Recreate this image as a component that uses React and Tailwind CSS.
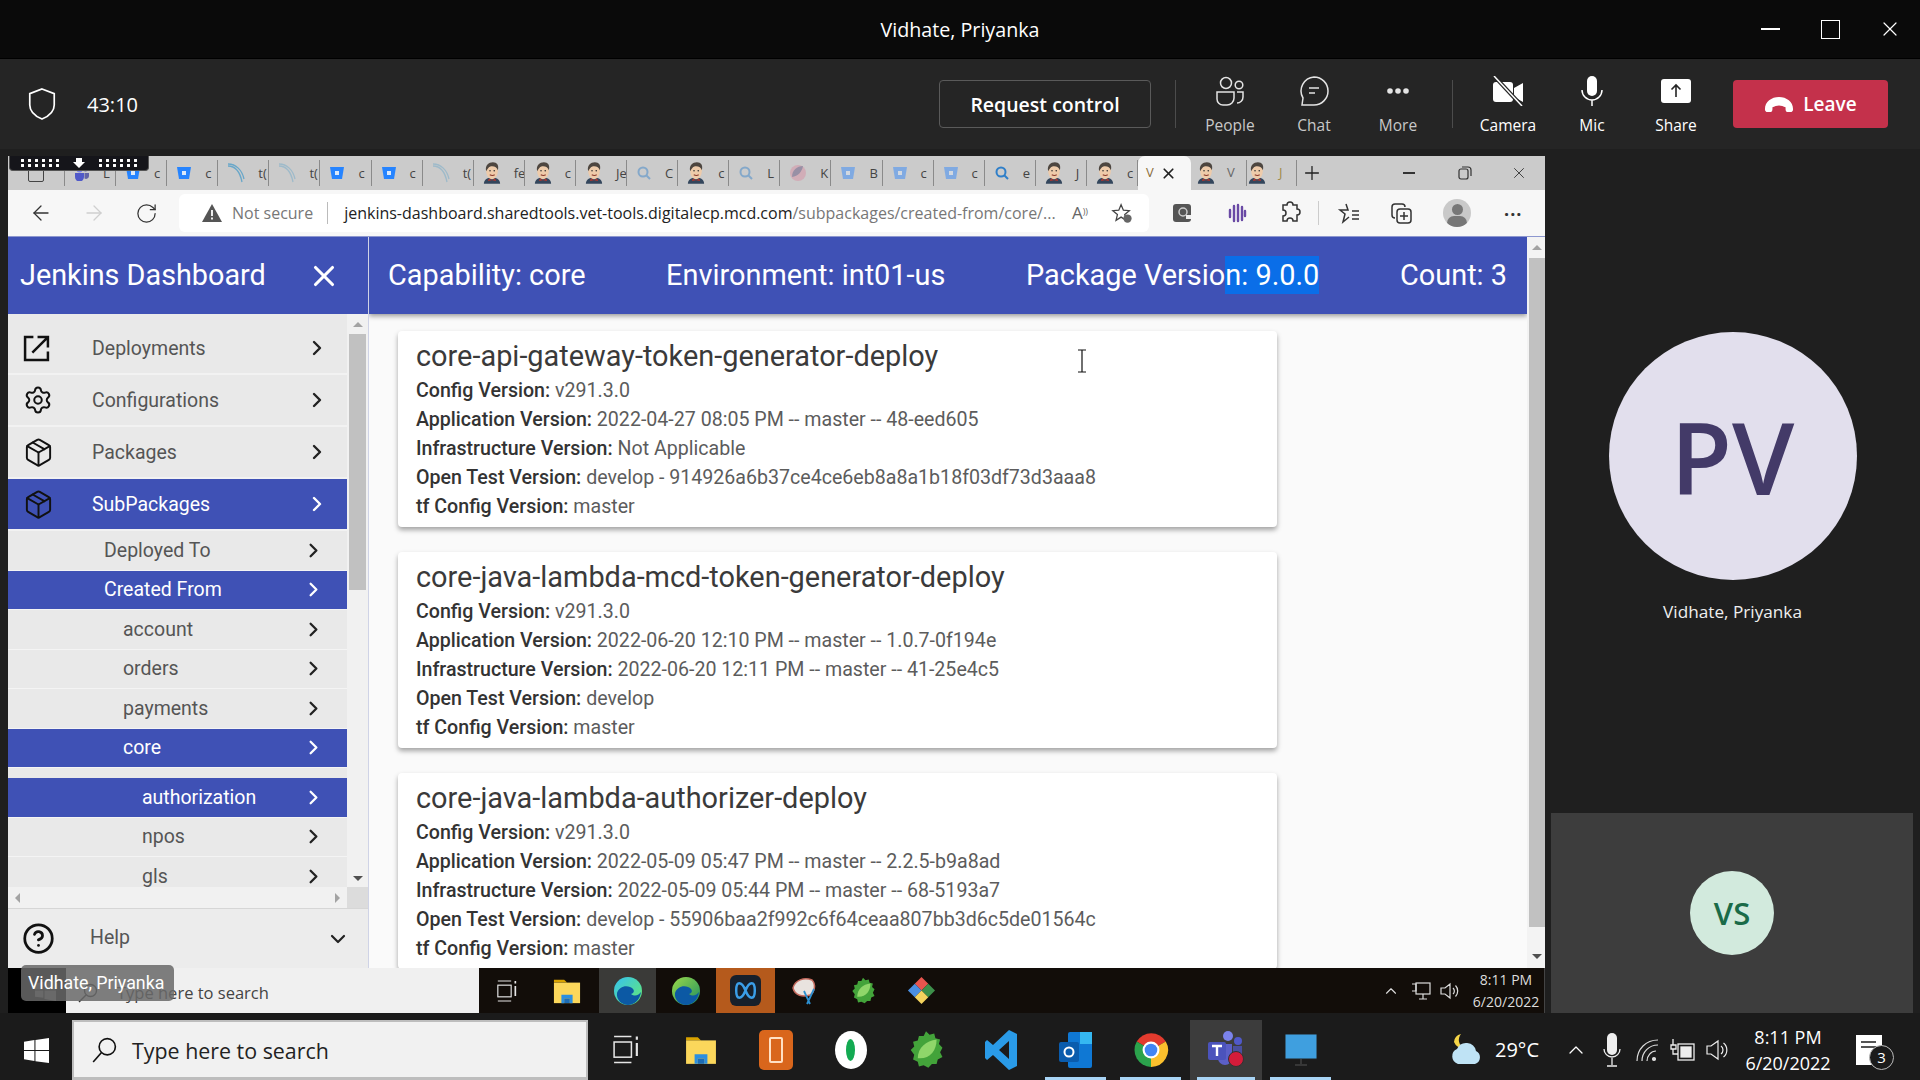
import {
  ArrowLeft,
  ArrowRight,
  ChevronDown,
  ChevronRight,
  CircleHelp,
  Package,
  Plus,
  RotateCw,
  Settings,
  X,
} from 'lucide-react';

const TEAMS_FONT = "font-['Open_Sans',sans-serif]";

const CARDS = [
  {
    name: 'core-api-gateway-token-generator-deploy',
    config: 'v291.3.0',
    app: '2022-04-27 08:05 PM -- master -- 48-eed605',
    infra: 'Not Applicable',
    test: 'develop - 914926a6b37ce4ce6eb8a8a1b18f03df73d3aaa8',
    tf: 'master',
  },
  {
    name: 'core-java-lambda-mcd-token-generator-deploy',
    config: 'v291.3.0',
    app: '2022-06-20 12:10 PM -- master -- 1.0.7-0f194e',
    infra: '2022-06-20 12:11 PM -- master -- 41-25e4c5',
    test: 'develop',
    tf: 'master',
  },
  {
    name: 'core-java-lambda-authorizer-deploy',
    config: 'v291.3.0',
    app: '2022-05-09 05:47 PM -- master -- 2.2.5-b9a8ad',
    infra: '2022-05-09 05:44 PM -- master -- 68-5193a7',
    test: 'develop - 55906baa2f992c6f64ceaa807bb3d6c5de01564c',
    tf: 'master',
  },
];

const TABS = [
  { icon: 'teams', letter: 'L' },
  { icon: 'bucket', letter: 'c' },
  { icon: 'bucket', letter: 'c' },
  { icon: 'wave', letter: 't(' },
  { icon: 'wave', letter: 't(', faded: true },
  { icon: 'bucket', letter: 'c' },
  { icon: 'bucket', letter: 'c' },
  { icon: 'wave', letter: 't(', faded: true },
  { icon: 'jenkins', letter: 'fe' },
  { icon: 'jenkins', letter: 'c' },
  { icon: 'jenkins', letter: 'Je' },
  { icon: 'search', letter: 'C', faded: true },
  { icon: 'jenkins', letter: 'c' },
  { icon: 'search', letter: 'L', faded: true },
  { icon: 'kibana', letter: 'K', faded: true },
  { icon: 'bucket', letter: 'B', faded: true },
  { icon: 'bucket', letter: 'c', faded: true },
  { icon: 'bucket', letter: 'c', faded: true },
  { icon: 'search', letter: 'e' },
  { icon: 'jenkins', letter: 'J' },
  { icon: 'jenkins', letter: 'c' },
];

const SUB_ROWS = [
  { label: 'Deployed To', indent: 'pl-[96px]' },
  { label: 'Created From', indent: 'pl-[96px]', active: true },
  { label: 'account', indent: 'pl-[115px]' },
  { label: 'orders', indent: 'pl-[115px]' },
  { label: 'payments', indent: 'pl-[115px]' },
  { label: 'core', indent: 'pl-[115px]', active: true },
  { label: 'authorization', indent: 'pl-[134px]', active: true, spaced: true },
  { label: 'npos', indent: 'pl-[134px]' },
  { label: 'gls', indent: 'pl-[134px]' },
];

function JenkinsFace() {
  return (
    <svg viewBox="0 0 20 24" className="w-[18px] h-[22px] shrink-0">
      <path d="M1 24c0-4 3-7 9-7s9 3 9 7z" fill="#33465c" />
      <path d="M6.500 18l3.500 2 3.500-2 1 3-4.500-1-4.500 1z" fill="#b5352c" />
      <path d="M3.500 9c0-6 3-8 6.500-8s6.500 2 6.500 8c0 6-3 10-6.500 10s-6.500-4-6.500-10z" fill="#eecbaa" />
      <path d="M3.500 10C2 3 6.500 0 11 0s7 3 5.500 9c-1-3-3-4.500-6.500-4.500S5.500 7 3.500 10z" fill="#4d4640" />
      <circle cx="7.800" cy="9.500" r="0.900" fill="#333" />
      <circle cx="12.500" cy="9.500" r="0.900" fill="#333" />
      <path d="M7.500 14c2 1 4 1 5.500 0" stroke="#8a3a2c" strokeWidth="1.200" fill="none" />
    </svg>
  );
}

function TabIcon({ type }) {
  if (type === 'jenkins') return <JenkinsFace />;
  if (type === 'bucket') {
    return (
      <svg viewBox="0 0 16 16" className="w-[16px] h-[16px] shrink-0">
        <path d="M1 2h14l-2 12H3z" fill="#2684ff" />
        <rect x="6" y="6" width="4" height="4" fill="#dbe9fb" />
      </svg>
    );
  }
  if (type === 'wave') {
    return (
      <svg viewBox="0 0 18 20" className="w-[18px] h-[20px] shrink-0" fill="none" stroke="#69a7c9" strokeWidth="1.300">
        <path d="M1 3c7 0 12 6 14 16" />
        <path d="M1 1c8 0 14 6 16 15" />
      </svg>
    );
  }
  if (type === 'search') {
    return (
      <svg viewBox="0 0 16 16" className="w-[16px] h-[16px] shrink-0" fill="none" stroke="#2f7fc9" strokeWidth="2">
        <circle cx="7" cy="7" r="4.500" />
        <path d="M10.500 10.500L14 14" />
      </svg>
    );
  }
  if (type === 'kibana') {
    return (
      <svg viewBox="0 0 18 18" className="w-[18px] h-[18px] shrink-0">
        <circle cx="9" cy="9" r="8" fill="#d98aa0" />
        <path d="M3 13C3 6 8 2 14 2c-1 6-5 10-11 11z" fill="#5c4a78" />
      </svg>
    );
  }
  return (
    <svg viewBox="0 0 16 16" className="w-[16px] h-[16px] shrink-0">
      <circle cx="11.500" cy="4" r="2.500" fill="#6264a7" />
      <circle cx="5.500" cy="4.500" r="3" fill="#7b83eb" />
      <path d="M1 8h9v4a4.500 4.500 0 0 1-9 0z" fill="#5059c9" />
      <path d="M10.500 8H15v3a3 3 0 0 1-4.500 2.500z" fill="#6264a7" />
    </svg>
  );
}

function TitleBar() {
  return (
    <div className={`h-[58px] shrink-0 grid grid-cols-[1fr_auto_1fr] items-center bg-[#0a0a0a] text-white ${TEAMS_FONT}`}>
      <div />
      <span className="text-[19.700px] pt-[2px]">Vidhate, Priyanka</span>
      <div className="flex justify-end items-center pr-[18px] gap-[36px]">
        <span className="w-[24px] h-[20px] flex items-center justify-center"><span className="w-[19px] h-[1.500px] bg-white" /></span>
        <span className="w-[24px] h-[20px] flex items-center justify-center"><span className="w-[19px] h-[19px] border-[1.500px] border-white" /></span>
        <X size={24} strokeWidth={1.200} />
      </div>
    </div>
  );
}

function ToolIcon({ type }) {
  if (type === 'people') {
    return (
      <svg viewBox="0 0 30 30" className="w-[30px] h-[30px]" fill="none" stroke="#e4e4e4" strokeWidth="1.500">
        <circle cx="11" cy="7" r="5.500" />
        <circle cx="24" cy="9" r="3.800" />
        <path d="M2 16h17v6a7 7 0 0 1-7 7H8a6 6 0 0 1-6-6z" />
        <path d="M22 16h6v5a6 6 0 0 1-6 6" />
      </svg>
    );
  }
  if (type === 'chat') {
    return (
      <svg viewBox="0 0 30 30" className="w-[30px] h-[30px]" fill="none" stroke="#e4e4e4" strokeWidth="1.500">
        <path d="M15 1a14 14 0 0 1 0 28H5l-2 0 1-7A14 14 0 0 1 15 1z" />
        <path d="M10 12h10M10 17h6" />
      </svg>
    );
  }
  if (type === 'more') {
    return (
      <svg viewBox="0 0 30 30" className="w-[30px] h-[30px]" fill="#e4e4e4">
        <circle cx="7" cy="15" r="2.800" />
        <circle cx="15" cy="15" r="2.800" />
        <circle cx="23" cy="15" r="2.800" />
      </svg>
    );
  }
  if (type === 'camera') {
    return (
      <svg viewBox="0 0 30 30" className="w-[30px] h-[30px]">
        <rect x="0" y="6" width="20" height="20" rx="3" fill="#fff" />
        <path d="M21 12l9-5v19l-9-5z" fill="#fff" />
        <path d="M1 0l28 30" stroke="#252525" strokeWidth="4" />
        <path d="M1 0l28 30" stroke="#fff" strokeWidth="1.500" />
      </svg>
    );
  }
  if (type === 'mic') {
    return (
      <svg viewBox="0 0 30 30" className="w-[30px] h-[30px]">
        <rect x="10" y="0" width="10" height="20" rx="5" fill="#fff" />
        <path d="M5 14a10 10 0 0 0 20 0M15 24v6" fill="none" stroke="#fff" strokeWidth="1.500" />
      </svg>
    );
  }
  return (
    <svg viewBox="0 0 30 30" className="w-[30px] h-[30px]">
      <rect x="0" y="3" width="30" height="24" rx="3" fill="#fff" />
      <path d="M15 21V9M10.500 13.500L15 9l4.500 4.500" fill="none" stroke="#252525" strokeWidth="1.600" />
    </svg>
  );
}

function ToolButton({ type, label, dim }) {
  return (
    <div className="w-[84px] pt-[3px] flex flex-col items-center">
      <ToolIcon type={type} />
      <span className={`text-[15.500px] mt-[9px] leading-[20px] ${dim ? 'text-[#c8c8c8]' : 'text-white'}`}>{label}</span>
    </div>
  );
}

function CallToolbar() {
  return (
    <div className={`h-[91px] shrink-0 flex items-center border-t border-[#000] bg-[#252525] text-white ${TEAMS_FONT}`}>
      <svg viewBox="0 0 28 34" className="ml-[28px] w-[28px] h-[32px]" fill="none" stroke="#fff" strokeWidth="1.800">
        <path d="M14 1l13 5v12c0 7-6 12-13 15C7 30 1 25 1 18V6z" />
      </svg>
      <span className="ml-[31px] text-[20px] pt-[2px]">43:10</span>
      <div className="ml-auto flex items-center pr-[32px]">
        <div className="w-[212px] h-[48px] flex items-center justify-center rounded-[4px] border border-[#5a5a5a] text-[19.500px] font-semibold pt-[1px]">
          Request control
        </div>
        <span className="ml-[24px] w-px h-[48px] bg-[#4c4c4c]" />
        <div className="ml-[12px] flex">
          <ToolButton type="people" label="People" dim />
          <ToolButton type="chat" label="Chat" dim />
          <ToolButton type="more" label="More" dim />
        </div>
        <span className="ml-[12px] w-px h-[48px] bg-[#4c4c4c]" />
        <div className="ml-[13px] flex">
          <ToolButton type="camera" label="Camera" />
          <ToolButton type="mic" label="Mic" />
          <ToolButton type="share" label="Share" />
        </div>
        <div className="ml-[15px] w-[155px] h-[48px] flex items-center justify-center gap-[9px] rounded-[4px] bg-[#c4314b] text-[19px] font-semibold pt-[1px]">
          <svg viewBox="0 0 32 20" className="w-[30px] h-[19px]" fill="#fff">
            <path d="M1 15C1 7 8 2 16 2s15 5 15 13c0 2-1 3-3 3h-3c-1 0-2-1-2-3v-2c-2-1-5-2-7-2s-5 1-7 2v2c0 2-1 3-2 3H4c-2 0-3-1-3-3z" />
          </svg>
          Leave
        </div>
      </div>
    </div>
  );
}

function DotGrid() {
  return (
    <span className="w-[42px] h-[10px] bg-[radial-gradient(circle,#ffffff_1.400px,transparent_1.700px)] bg-[length:7px_5px]" />
  );
}

function BrowserTabs() {
  return (
    <div className={`relative h-[34px] shrink-0 flex bg-[#cbcbcb] ${TEAMS_FONT}`}>
      <div className="w-[57px] shrink-0 flex items-center justify-center border-r border-[#8a8a8a] my-[4px]">
        <span className="w-[16px] h-[16px] border border-[#444] rounded-[2px] mt-[2px]" />
      </div>
      {TABS.map((tab, i) => (
        <div key={i} className="w-[51.100px] shrink-0 my-[4px] flex items-center overflow-hidden pl-[9px] gap-[13px] border-r border-[#8a8a8a]">
          <span className={tab.faded ? 'opacity-45' : ''}>
            <TabIcon type={tab.icon} />
          </span>
          <span className="text-[13px] text-[#444] leading-none whitespace-nowrap">{tab.letter}</span>
        </div>
      ))}
      <div className="w-[53px] shrink-0 flex items-center pl-[8px] gap-[6px] bg-[#f7f7f7] rounded-t-[7px]">
        <span className="text-[13px] text-[#8a6d3b]">V</span>
        <X size={17} strokeWidth={2.400} className="text-[#222]" />
      </div>
      <div className="w-[50px] shrink-0 my-[4px] ml-[6px] flex items-center gap-[12px] border-r border-[#8a8a8a]">
        <JenkinsFace />
        <span className="text-[13px] text-[#666]">V</span>
      </div>
      <div className="w-[50px] shrink-0 my-[4px] pl-[1px] flex items-center gap-[13px] border-r border-[#8a8a8a]">
        <JenkinsFace />
        <span className="text-[13px] text-[#a08a4a]">J</span>
      </div>
      <div className="ml-[4px] flex items-center">
        <Plus size={22} strokeWidth={1.400} className="text-[#222]" />
      </div>
      <div className="ml-auto flex items-center pr-[17px] text-[#333]">
        <span className="w-[12px] h-[1.500px] bg-[#333]" />
        <svg viewBox="0 0 14 14" className="ml-[43px] w-[14px] h-[14px]" fill="none" stroke="#333" strokeWidth="1.200">
          <rect x="1" y="3" width="9" height="10" rx="2" />
          <path d="M4 1h6a3 3 0 0 1 3 3v6" />
        </svg>
        <X size={18} strokeWidth={1.200} className="ml-[38px]" />
      </div>
      {/* remote control pin bar */}
      <div className="absolute left-[1px] top-0 w-[140px] h-[15px] flex items-center justify-center gap-[12px] rounded-b-[4px] bg-[#15151a] border border-t-0 border-[#555]">
        <DotGrid />
        <svg viewBox="0 0 12 10" className="w-[12px] h-[10px]" fill="#fff">
          <path d="M3 0h6v4h3L6 10 0 4h3z" />
        </svg>
        <DotGrid />
      </div>
    </div>
  );
}

function AddressBar() {
  return (
    <div className={`h-[46px] shrink-0 flex items-center bg-[#f7f7f7] ${TEAMS_FONT}`}>
      <ArrowLeft size={24} strokeWidth={1.300} className="ml-[21px] text-[#333]" />
      <ArrowRight size={24} strokeWidth={1.300} className="ml-[29px] text-[#cfcfcf]" />
      <RotateCw size={23} strokeWidth={1.300} className="ml-[29px] text-[#333]" />
      <div className="ml-[21px] w-[970px] h-[38px] flex items-center rounded-[6px] bg-white">
        <svg viewBox="0 0 20 18" className="ml-[23px] w-[20px] h-[18px]">
          <path d="M10 0l10 18H0z" fill="#555" />
          <path d="M10 6v6M10 13.500v2" stroke="#fff" strokeWidth="1.800" />
        </svg>
        <span className="ml-[10px] text-[16px] text-[#777]">Not secure</span>
        <span className="ml-[14px] w-px h-[22px] bg-[#bbb]" />
        <span className="ml-[16px] text-[16px] whitespace-nowrap text-[#222]">
          jenkins-dashboard.sharedtools.vet-tools.digitalecp.mcd.com
          <span className="text-[#777]">/subpackages/created-from/core/...</span>
        </span>
        <div className="ml-auto flex items-center pr-[16px]">
          <span className="text-[17px] text-[#666] -ml-[2px]">A<sup className="text-[9px]">))</sup></span>
          <svg viewBox="0 0 24 24" className="ml-[23px] w-[22px] h-[22px]" fill="none" stroke="#444" strokeWidth="1.400">
            <path d="M11 3l2.500 6 6.500.5-5 4.200 1.500 6.300L11 16.500 5.500 20 7 13.700 2 9.500 8.500 9z" />
            <circle cx="18" cy="18" r="4.500" fill="#666" stroke="none" />
          </svg>
        </div>
      </div>
      <div className="flex items-center flex-1 text-[#333]">
        <svg viewBox="0 0 20 20" className="ml-[24px] w-[20px] h-[20px]">
          <rect width="18" height="18" y="1" rx="3" fill="#555" />
          <circle cx="10" cy="9" r="4" fill="none" stroke="#ccc" strokeWidth="1.500" />
          <rect x="13" y="12" width="5" height="4" fill="#eee" />
        </svg>
        <svg viewBox="0 0 20 20" className="ml-[34px] w-[20px] h-[20px]" stroke="#6a4aa5" strokeWidth="2.400" strokeLinecap="round">
          <path d="M3 7v7M7 3v15M11 2v16M15 4v13M18 8v5" />
        </svg>
        <svg viewBox="0 0 24 24" className="ml-[31px] w-[24px] h-[24px]" fill="none" stroke="#333" strokeWidth="1.500">
          <path d="M9 4a3 3 0 0 1 6 0h4v4a3 3 0 0 1 0 6v6h-4a3 3 0 0 0-6 0H5v-5a3 3 0 0 0 0-6V4z" />
        </svg>
        <span className="ml-[16px] w-px h-[24px] bg-[#ccc]" />
        <svg viewBox="0 0 24 24" className="ml-[18px] w-[24px] h-[24px]" fill="none" stroke="#333" strokeWidth="1.500">
          <path d="M9 3l2 6H3l5 4-2 8 6-5M15 10h7M15 14h7M15 18h7" />
        </svg>
        <svg viewBox="0 0 24 24" className="ml-[28px] w-[24px] h-[24px]" fill="none" stroke="#333" strokeWidth="1.500">
          <path d="M6 17a3 3 0 0 1-3-3V6a3 3 0 0 1 3-3h7a3 3 0 0 1 3 3" />
          <rect x="8" y="8" width="14" height="14" rx="3" />
          <path d="M15 11v8M11 15h8" />
        </svg>
        <div className="ml-[30px] w-[28px] h-[28px] rounded-full bg-[#c9c9c9] relative overflow-hidden">
          <span className="absolute left-[9px] top-[5px] w-[11px] h-[11px] rounded-full bg-[#777]" />
          <span className="absolute left-[4px] top-[17px] w-[20px] h-[14px] rounded-full bg-[#777]" />
        </div>
        <span className="ml-[33px] text-[18px] leading-none font-bold tracking-[1px] -mt-[8px]">...</span>
      </div>
    </div>
  );
}

function DeployIcon() {
  return (
    <svg viewBox="0 0 26 26" className="w-[27px] h-[27px]" fill="none" stroke="#111" strokeWidth="2.400">
      <path d="M10 2H2v22h22v-8" />
      <path d="M9 17L23 3M14 2h10v10" />
    </svg>
  );
}

function TopRow({ icon, label, active }) {
  return (
    <div
      className={`flex items-center h-[52px] border-b-2 border-[#f2f2f2] pr-[18px] ${
        active ? 'bg-[#3f51b5] text-white' : 'text-[#555]'
      }`}
    >
      <div className="w-[84px] pl-[15px] text-[#111]">{icon}</div>
      <span className="flex-1 text-[19.500px] mt-[2px]">{label}</span>
      <ChevronRight size={24} strokeWidth={2.400} className={active ? 'text-white' : 'text-[#222]'} />
    </div>
  );
}

function SubRow({ row }) {
  return (
    <div
      className={`flex items-center h-[39.500px] border-b border-[#f4f4f4] pr-[22px] ${row.indent} ${
        row.spaced ? 'mt-[10px]' : ''
      } ${row.active ? 'bg-[#3f51b5] text-white' : 'text-[#555]'}`}
    >
      <span className="flex-1 text-[19.500px]">{row.label}</span>
      <ChevronRight size={23} strokeWidth={2.400} className={row.active ? 'text-white' : 'text-[#222]'} />
    </div>
  );
}

function Arrow({ dir }) {
  const cls = {
    up: 'border-x-[5px] border-x-transparent border-b-[5px] border-b-[#a3a3a3]',
    down: 'border-x-[5px] border-x-transparent border-t-[5px] border-t-[#505050]',
    left: 'border-y-[5px] border-y-transparent border-r-[5px] border-r-[#a3a3a3]',
    right: 'border-y-[5px] border-y-transparent border-l-[5px] border-l-[#a3a3a3]',
  };
  return <span className={`w-0 h-0 ${cls[dir]}`} />;
}

function Sidebar() {
  return (
    <div className="w-[361px] shrink-0 flex flex-col border-r border-[#cfd3e6] font-[Roboto,sans-serif]">
      <div className="h-[77px] shrink-0 flex items-center justify-between pl-[12px] pr-[27px] bg-[#3f51b5] text-white">
        <span className="text-[28.800px]">Jenkins Dashboard</span>
        <X size={34} strokeWidth={2.200} />
      </div>
      <div className="flex h-[573px] shrink-0">
        <div className="w-[339px] shrink-0 pt-[9px] bg-[#e9e9e9] overflow-hidden">
          <TopRow label="Deployments" icon={<DeployIcon />} />
          <TopRow label="Configurations" icon={<Settings size={30} strokeWidth={1.600} />} />
          <TopRow label="Packages" icon={<Package size={31} strokeWidth={1.500} />} />
          <TopRow label="SubPackages" active icon={<Package size={31} strokeWidth={1.500} />} />
          {SUB_ROWS.map((row) => (
            <SubRow key={row.label} row={row} />
          ))}
        </div>
        <div className="flex-1 flex flex-col items-center bg-[#f1f1f1] px-[2px]">
          <div className="h-[20px] flex items-center"><Arrow dir="up" /></div>
          <div className="w-full h-[256px] bg-[#c1c1c1]" />
          <div className="mt-auto h-[18px] flex items-center"><Arrow dir="down" /></div>
        </div>
      </div>
      <div className="h-[21px] shrink-0 flex">
        <div className="w-[339px] flex items-center justify-between px-[7px] bg-[#f1f1f1]">
          <Arrow dir="left" />
          <Arrow dir="right" />
        </div>
        <div className="flex-1 bg-[#dcdcdc]" />
      </div>
      <div className="flex-1 flex items-center pr-[18px] bg-[#ececec] border-t border-[#d6d6d6] text-[#555]">
        <div className="w-[82px] pl-[14px] text-[#111]"><CircleHelp size={33} strokeWidth={2} /></div>
        <span className="flex-1 text-[19.500px] -mt-[2px]">Help</span>
        <ChevronDown size={24} strokeWidth={2.200} className="text-[#222]" />
      </div>
    </div>
  );
}

function DetailLine({ label, value }) {
  return (
    <p className="h-[29px] text-[19.600px] leading-[29px] whitespace-nowrap text-[#5c5c5c]">
      <span className="font-medium text-[#333]">{label}:</span> {value}
    </p>
  );
}

function PackageCard({ card }) {
  return (
    <div className="w-[879px] shrink-0 rounded-[4px] bg-white px-[18px] pt-[6px] pb-[6px] shadow-[0_3px_5px_rgba(0,0,0,0.35)]">
      <h2 className="h-[39px] text-[28.900px] leading-[39px] whitespace-nowrap text-[#3a3a3a]">{card.name}</h2>
      <DetailLine label="Config Version" value={card.config} />
      <DetailLine label="Application Version" value={card.app} />
      <DetailLine label="Infrastructure Version" value={card.infra} />
      <DetailLine label="Open Test Version" value={card.test} />
      <DetailLine label="tf Config Version" value={card.tf} />
    </div>
  );
}

function MainPanel() {
  return (
    <div className="flex-1 flex min-w-0 font-[Roboto,sans-serif]">
      <div className="relative flex-1 flex flex-col min-w-0 bg-[#fafafa] overflow-hidden">
        <div className="relative z-10 h-[77px] shrink-0 flex items-center justify-between pl-[19px] pr-[20px] bg-[#3f51b5] text-white text-[28.900px] shadow-[0_2px_5px_rgba(0,0,0,0.4)]">
          <span>Capability: core</span>
          <span>Environment: int01-us</span>
          <span>
            Package Versio
            <span className="inline-block h-[38px] leading-[38px] bg-[#0a6ee8]">n: 9.0.0</span>
          </span>
          <span>Count: 3</span>
        </div>
        <div className="flex-1 flex flex-col gap-[25px] pl-[29px] pt-[17px] overflow-hidden">
          {CARDS.map((card) => (
            <PackageCard key={card.name} card={card} />
          ))}
        </div>
        {/* text cursor */}
        <svg viewBox="0 0 10 24" className="absolute left-[708px] top-[112px] z-10 w-[10px] h-[24px]" fill="none" stroke="#111" strokeWidth="1.200">
          <path d="M1 1h8M5 1v22M1 23h8" />
        </svg>
      </div>
      <div className="w-[18px] shrink-0 flex flex-col items-center bg-[#f3f3f3] pl-[2px]">
        <div className="h-[21px] flex items-center"><Arrow dir="up" /></div>
        <div className="w-full h-[669px] bg-[#c1c1c1]" />
        <div className="mt-auto h-[24px] flex items-center"><Arrow dir="down" /></div>
      </div>
    </div>
  );
}

function FolderIcon({ size }) {
  return (
    <svg viewBox="0 0 30 30" style={{ width: size, height: size }}>
      <path d="M1 3h11l3 3H1z" fill="#d9a300" />
      <rect x="1" y="6" width="28" height="22" fill="#fbd75b" />
      <path d="M9 28v-9h12v9h-3v-5h-6v5z" fill="#2b8fe0" />
      <rect x="12" y="23" width="6" height="5" fill="#1c6cb5" />
    </svg>
  );
}

function SpringIcon({ size }) {
  return (
    <svg viewBox="0 0 30 34" style={{ width: size, height: size }}>
      <path d="M15 1l3 3 4-1 1 4 4 1-1 4 3 3-2 4 2 4-4 2-1 4-4 0-3 3-4-2-4 1-1-4-4-2 1-4-3-4 3-3-1-4 4-1 1-4 4 0z" fill="#43a33a" />
      <path d="M8 24C8 15 15 9 24 8c0 10-6 17-16 16z" fill="#8fd66a" />
    </svg>
  );
}

function EdgeIcon({ id, from, to }) {
  return (
    <svg viewBox="0 0 30 30" className="w-[30px] h-[30px]">
      <defs>
        <linearGradient id={id} x1="0" y1="0" x2="1" y2="1">
          <stop offset="0" stopColor={from} />
          <stop offset="1" stopColor={to} />
        </linearGradient>
      </defs>
      <circle cx="15" cy="15" r="14" fill={`url(#${id})`} />
      <path d="M4 17c2-6 8-8 13-6s5 6 1 7c4 3 8 1 10-2-1 8-7 13-13 13C9 29 3 24 4 17z" fill="#0c59a4" />
    </svg>
  );
}

function TaskViewIcon({ size }) {
  return (
    <svg viewBox="0 0 24 28" style={{ width: size, height: size * 1.2 }} fill="none" stroke="#e6e6e6" strokeWidth="1.400">
      <path d="M1 2h16M1 26h16" />
      <rect x="1" y="7" width="16" height="14" />
      <path d="M22 2v3M22 8v12" strokeWidth="2" />
    </svg>
  );
}

function InnerTaskbar() {
  return (
    <div className={`relative h-[45px] shrink-0 flex ml-[8px] bg-[#120d09] ${TEAMS_FONT}`}>
      <div className="w-[58px] shrink-0 flex items-center justify-center bg-black">
        <svg viewBox="0 0 20 20" className="w-[21px] h-[21px] ml-[16px] opacity-70" fill="#9a9a9a">
          <path d="M0 3l8-1v7H0zM9 2l11-2v9H9zM0 10h8v7l-8-1zM9 10h11v10L9 18z" />
        </svg>
      </div>
      <div className="w-[413px] shrink-0 flex items-center bg-[#f0f0f0] text-[#444] text-[16.500px]">
        <svg viewBox="0 0 20 20" className="ml-[12px] mt-[5px] w-[20px] h-[20px]" fill="none" stroke="#333" strokeWidth="1.400">
          <circle cx="12.500" cy="7.500" r="6" />
          <path d="M8 12l-7 7" />
        </svg>
        <span className="ml-[19px] mt-[5px]">Type here to search</span>
      </div>
      <div className="flex-1 flex items-stretch">
        <div className="w-[56px] flex items-center justify-center">
          <TaskViewIcon size={20} />
        </div>
        <div className="w-[64px] flex items-center justify-center"><FolderIcon size={28} /></div>
        <div className="w-[57px] flex items-center justify-center bg-[#3a3a38]">
          <EdgeIcon id="edge-a" from="#35c1f1" to="#66eb6e" />
        </div>
        <div className="w-[60px] flex items-center justify-center">
          <EdgeIcon id="edge-b" from="#9ad94a" to="#1f8f5f" />
        </div>
        <div className="w-[59px] flex items-center justify-center bg-[#b55a1c]">
          <svg viewBox="0 0 30 30" className="w-[31px] h-[31px]">
            <rect width="30" height="30" rx="6" fill="#17202b" />
            <path d="M15 15c-2-5-4-7-6-7s-3 3-3 7 1 7 3 7 4-2 6-7c2-5 4-7 6-7s3 3 3 7-1 7-3 7-4-2-6-7z" fill="none" stroke="#3a9ee8" strokeWidth="2.400" />
          </svg>
        </div>
        <div className="w-[60px] flex items-center justify-center">
          <svg viewBox="0 0 30 30" className="w-[30px] h-[30px]">
            <path d="M3 12C5 4 14 1 22 4c4 4 3 12-2 15-7 2-15 1-17-7z" fill="#e9e3df" stroke="#c46a5e" strokeWidth="1.500" />
            <path d="M14 15l6 13M24 13l-7 15" stroke="#2c8fd0" strokeWidth="1.800" />
          </svg>
        </div>
        <div className="w-[56px] flex items-center justify-center"><SpringIcon size={28} /></div>
        <div className="w-[60px] flex items-center justify-center">
          <svg viewBox="0 0 30 30" className="w-[29px] h-[29px]">
            <path d="M15 1l7 7-7 7-7-7z" fill="#e8554e" />
            <path d="M8 8l7 7-7 7-7-7z" fill="#4b8fe2" />
            <path d="M22 8l7 7-7 7-7-7z" fill="#3d8f4a" />
            <path d="M15 15l7 7-7 7-7-7z" fill="#f4d35e" />
          </svg>
        </div>
        <div className="ml-auto flex items-center">
          <ChevronDown size={18} strokeWidth={1.500} className="rotate-180 text-[#ddd]" />
          <svg viewBox="0 0 20 20" className="ml-[11px] w-[20px] h-[20px]" fill="none" stroke="#ddd" strokeWidth="1.200">
            <rect x="5" y="2" width="14" height="11" />
            <path d="M12 13v5M8 18h8M1 3h4v7H1" />
          </svg>
          <svg viewBox="0 0 20 20" className="ml-[9px] w-[20px] h-[20px]" fill="none" stroke="#ddd" strokeWidth="1.200">
            <path d="M1 7h4l5-4v14l-5-4H1zM13 7a4 4 0 0 1 0 6M15.500 4.500a8 8 0 0 1 0 11" />
          </svg>
          <div className="ml-[8px] w-[76px] flex flex-col items-center text-[14px] leading-[22px] text-[#ddd]">
            <span>8:11 PM</span>
            <span>6/20/2022</span>
          </div>
          <span className="w-px h-[45px] bg-[#444]" />
        </div>
      </div>
      <div className="absolute left-[13px] -top-[3px] w-[153px] h-[36px] flex items-center pl-[7px] rounded-[5px] bg-[rgba(105,105,105,0.85)] text-white text-[17.800px] font-[Roboto,sans-serif]">
        Vidhate, Priyanka
      </div>
    </div>
  );
}

function TaskSlot({ children, open, active }) {
  return (
    <div className={`relative h-[60px] shrink-0 flex items-center justify-center ${active ? 'w-[72px] mx-[1.500px] bg-[#3c3c3c]' : 'w-[75px]'}`}>
      {children}
      {open && <span className="absolute bottom-0 left-[7px] right-[7px] h-[3px] bg-[#a8d4f5]" />}
    </div>
  );
}

function OuterTaskbar() {
  return (
    <div className={`flex-1 flex items-end bg-[#1b1b1b] text-white ${TEAMS_FONT}`}>
      <div className="w-[72px] h-[60px] shrink-0 flex items-center justify-center">
        <svg viewBox="0 0 24 24" className="w-[25px] h-[25px]" fill="#fff">
          <path d="M0 3.500L10 2v9.500H0zM11 1.800L24 0v11.500H11zM0 12.500h10V22L0 20.500zM11 12.500h13V24l-13-1.800z" />
        </svg>
      </div>
      <div className="w-[516px] h-[60px] shrink-0 flex items-center bg-[#f1f1f1] border-2 border-[#bdbdbd] border-b-[3px] text-[#222] text-[21.400px]">
        <svg viewBox="0 0 24 24" className="ml-[17px] w-[26px] h-[26px]" fill="none" stroke="#111" strokeWidth="1.500">
          <circle cx="15" cy="9" r="7.500" />
          <path d="M9.500 14.500L2 23" />
        </svg>
        <span className="ml-[15px] mt-[3px]">Type here to search</span>
      </div>
      <TaskSlot><TaskViewIcon size={26} /></TaskSlot>
      <TaskSlot><FolderIcon size={32} /></TaskSlot>
      <TaskSlot>
        <span className="w-[34px] h-[40px] rounded-[5px] bg-[#d9661c] flex items-center justify-center">
          <span className="w-[14px] h-[26px] rounded-[2px] border-2 border-[#ffe0c4]" />
        </span>
      </TaskSlot>
      <TaskSlot>
        <span className="w-[32px] h-[38px] rounded-[50%] bg-white flex items-center justify-center">
          <span className="w-[9px] h-[22px] rounded-[50%] bg-[#13aa52]" />
        </span>
      </TaskSlot>
      <TaskSlot><SpringIcon size={40} /></TaskSlot>
      <TaskSlot>
        <svg viewBox="0 0 32 40" className="w-[36px] h-[40px]" fill="#2a9be8">
          <path d="M24 0l8 4v32l-8 4-16-15-6 5-2-2V12l2-2 6 5zM24 11L14 20l10 9z" />
        </svg>
      </TaskSlot>
      <TaskSlot open>
        <svg viewBox="0 0 36 40" className="w-[36px] h-[40px]">
          <rect x="10" y="2" width="24" height="36" rx="2" fill="#0f78d4" />
          <rect x="22" y="2" width="12" height="12" fill="#35b8f1" />
          <rect x="1" y="12" width="20" height="20" rx="2" fill="#0a5cad" />
          <circle cx="11" cy="22" r="4.500" fill="none" stroke="#fff" strokeWidth="2" />
        </svg>
      </TaskSlot>
      <TaskSlot open>
        <svg viewBox="0 0 36 36" className="w-[38px] h-[38px]">
          <path d="M18 18L4.500 10A16 16 0 0 1 32 10z" fill="#e33b2e" />
          <path d="M18 18L32 10A16 16 0 0 1 18 34z" fill="#fbc02d" />
          <path d="M18 18v16A16 16 0 0 1 4.500 10z" fill="#2ba24c" />
          <circle cx="18" cy="18" r="8" fill="#fff" />
          <circle cx="18" cy="18" r="6" fill="#4285f4" />
        </svg>
      </TaskSlot>
      <TaskSlot open active>
        <svg viewBox="0 0 40 40" className="w-[40px] h-[40px]">
          <circle cx="22" cy="6" r="5" fill="#7b83eb" />
          <circle cx="32" cy="11" r="4" fill="#5059c9" />
          <path d="M12 14h14v14a7 7 0 0 1-14 0z" fill="#5b5fc7" />
          <path d="M27 16h9v10a5 5 0 0 1-9 2z" fill="#4a4f9f" />
          <rect x="2" y="12" width="18" height="18" rx="2" fill="#4b53bc" />
          <path d="M6 16h10M11 16v10" stroke="#fff" strokeWidth="2.400" />
          <circle cx="30" cy="29" r="7.500" fill="#d41c3a" stroke="#333" />
        </svg>
      </TaskSlot>
      <TaskSlot open>
        <svg viewBox="0 0 32 32" className="w-[32px] h-[32px]">
          <rect x="0" y="0" width="32" height="25" fill="#3f9fdf" stroke="#222" />
          <path d="M16 25v5M10 31h12" stroke="#555" />
        </svg>
      </TaskSlot>
      <div className="ml-auto h-[60px] flex items-center pr-[38px]">
        <svg viewBox="0 0 36 36" className="w-[36px] h-[36px]">
          <path d="M12 2a9 9 0 0 0 3 14A10 10 0 0 1 5 10a9 9 0 0 1 7-8z" fill="#f5d547" />
          <path d="M9 32a8 8 0 0 1-1-15 10 10 0 0 1 19 2 7 7 0 0 1-1 13z" fill="#bfe3f5" />
        </svg>
        <span className="ml-[10px] text-[20px]">29°C</span>
        <ChevronDown size={24} strokeWidth={1.300} className="ml-[25px] rotate-180" />
        <svg viewBox="0 0 20 34" className="ml-[14px] w-[20px] h-[34px]">
          <rect x="5" y="0" width="10" height="22" rx="5" fill="#eee" />
          <path d="M2 16a8 8 0 0 0 16 0M10 25v7M5 33h10" fill="none" stroke="#eee" strokeWidth="1.300" />
        </svg>
        <svg viewBox="0 0 24 24" className="ml-[14px] w-[24px] h-[24px]" fill="none" stroke="#ddd" strokeWidth="1.200">
          <path d="M1 23C1 11 10 2 22 2M6 23c0-9 7-16 16-16M11 23c0-5 4-10 9-10" />
          <circle cx="18" cy="21" r="1.500" fill="#ddd" />
        </svg>
        <svg viewBox="0 0 26 24" className="ml-[10px] w-[26px] h-[24px]" fill="none" stroke="#eee" strokeWidth="1.300">
          <rect x="8" y="6" width="16" height="16" />
          <rect x="11" y="9" width="10" height="10" fill="#eee" />
          <path d="M3 1v6M1 7h5v4H1zM3 11v5h5" />
        </svg>
        <svg viewBox="0 0 24 24" className="ml-[9px] w-[24px] h-[24px]" fill="none" stroke="#eee" strokeWidth="1.200">
          <path d="M2 8h4l7-5v18l-7-5H2zM16 8a5 5 0 0 1 0 8M18.500 5a9 9 0 0 1 0 14" />
        </svg>
        <div className="ml-[13px] w-[92px] flex flex-col items-center text-[18px] leading-[26px]">
          <span>8:11 PM</span>
          <span>6/20/2022</span>
        </div>
        <div className="relative ml-[22px] w-[26px] h-[30px] bg-white">
          <span className="absolute left-[5px] top-[6px] w-[15px] h-[2px] bg-[#555]" />
          <span className="absolute left-[5px] top-[11px] w-[15px] h-[2px] bg-[#555]" />
          <span className="absolute -right-[12px] top-[10px] w-[25px] h-[25px] rounded-full border border-[#bbb] bg-[#1b1b1b] text-[15px] leading-[23px] text-center">3</span>
        </div>
      </div>
    </div>
  );
}

function ParticipantsPanel() {
  return (
    <div className={`flex-1 flex flex-col ${TEAMS_FONT}`}>
      <div className="flex-1 flex flex-col items-center pt-[183px]">
        <div className="w-[248px] h-[248px] rounded-full flex items-center justify-center bg-[#e2dfed] text-[#433a68] text-[100px] font-semibold">
          PV
        </div>
        <span className="mt-[19px] text-[17.200px] text-[#eee]">Vidhate, Priyanka</span>
      </div>
      <div className="ml-[6px] w-[362px] h-[200px] shrink-0 flex items-center justify-center bg-[#3d3d3d]">
        <div className="w-[84px] h-[84px] rounded-full flex items-center justify-center bg-[#d2eadd] text-[#1a6b48] text-[31px] font-semibold">
          VS
        </div>
      </div>
    </div>
  );
}

export default function App() {
  return (
    <div className="w-[1920px] h-[1080px] flex flex-col overflow-hidden bg-[#1f1f1f]">
      <TitleBar />
      <CallToolbar />
      <div className="h-[864px] shrink-0 flex">
        <div className="w-[1545px] shrink-0 flex flex-col pt-[7px]">
          <div className="flex-1 min-h-0 ml-[8px] flex flex-col">
            <BrowserTabs />
            <AddressBar />
            <div className="flex-1 min-h-0 flex border-t border-[#8d97cf]">
              <Sidebar />
              <MainPanel />
            </div>
          </div>
          <InnerTaskbar />
        </div>
        <ParticipantsPanel />
      </div>
      <OuterTaskbar />
    </div>
  );
}
